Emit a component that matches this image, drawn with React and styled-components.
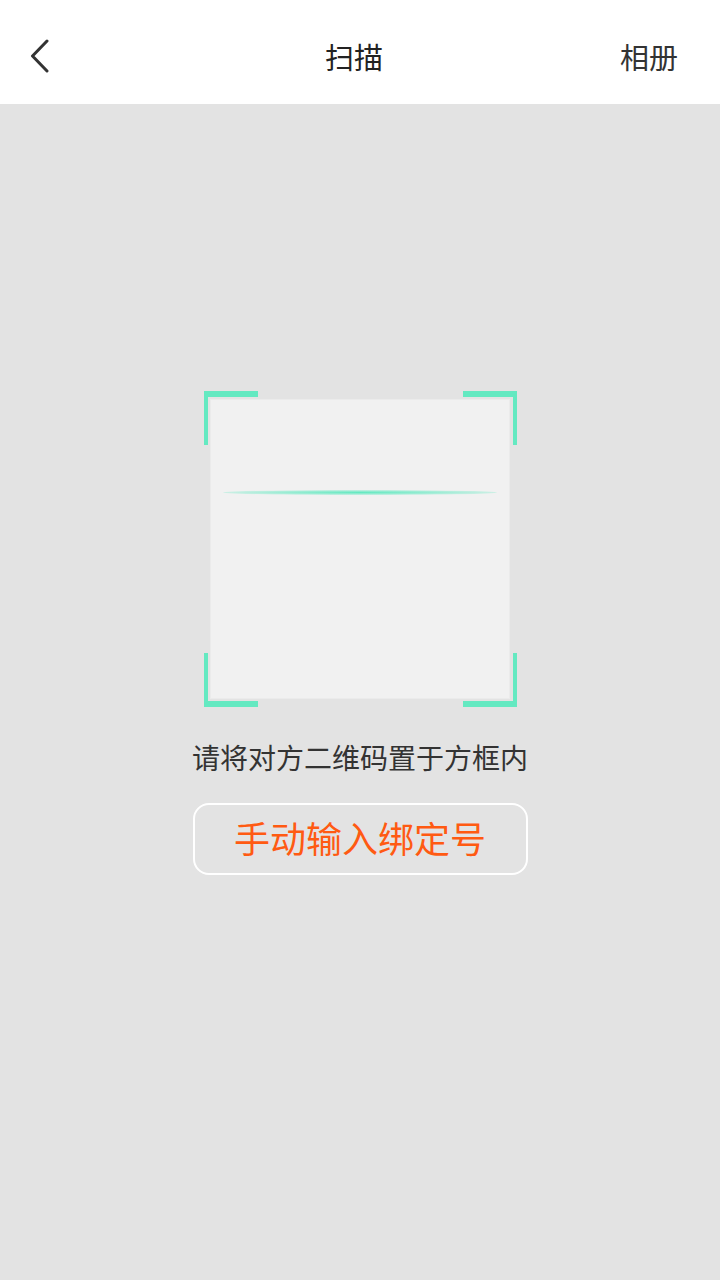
import React from 'react';
import styled, { createGlobalStyle, css } from 'styled-components';

const GlobalStyle = createGlobalStyle`
    html, body {
        margin: 0;
        padding: 0;
        background: #e3e3e3;
    }
    body {
        font-family: "Noto Sans CJK SC", "Noto Sans", sans-serif;
    }
`;

const Page = styled.div`
    min-height: 1280px;
    display: flex;
    flex-direction: column;
    background: #e3e3e3;
`;

const Header = styled.header`
    height: 104px;
    background: #fff;
    display: grid;
    grid-template-columns: 1fr auto 1fr;
    align-items: center;
    padding: 0 42px 0 30px;
    box-sizing: border-box;
`;

const BackButton = styled.button`
    border: none;
    background: none;
    padding: 0;
    width: 36px;
    height: 40px;
    display: flex;
    align-items: center;
    justify-content: flex-start;
    margin-top: 8px;
`;

const Title = styled.h1`
    margin: 0;
    text-align: center;
    font-size: 29px;
    font-weight: 400;
    color: #222;
    line-height: 1;
    margin-top: 8px;
`;

const AlbumLink = styled.span`
    justify-self: end;
    font-size: 29px;
    color: #333;
    line-height: 1;
    margin-top: 8px;
`;

const Body = styled.main`
    display: flex;
    flex-direction: column;
    align-items: center;
    padding-top: 287px;
`;

const Frame = styled.div`
    position: relative;
    width: 313px;
    height: 316px;
    box-sizing: border-box;
    padding: 8px 7px 8px 6px;
`;

const Window = styled.div`
    width: 300px;
    height: 300px;
    box-sizing: border-box;
    background: #f1f1f1;
    border: 1px solid #ebebeb;
    padding: 90px 12px 0 12px;
`;

const ScanLine = styled.div`
    height: 5px;
    border-radius: 50%;
    background: radial-gradient(ellipse at center, rgba(100, 233, 193, 1) 0%, rgba(100, 233, 193, 0.6) 40%, rgba(100, 233, 193, 0.15) 80%, rgba(100, 233, 193, 0) 100%);
`;

const Corner = styled.span`
    position: absolute;
    width: 54px;
    height: 54px;
    box-sizing: border-box;
    border: 0 solid #64e9c1;
    ${p => p.top ? css`top: 0; border-top-width: 6px;` : css`bottom: 0; border-bottom-width: 6px;`}
    ${p => p.left ? css`left: 0; border-left-width: 4px;` : css`right: 0; border-right-width: 4px;`}
`;

const Hint = styled.p`
    margin: 33px 0 0;
    font-size: 28px;
    line-height: 34px;
    color: #333;
`;

const ManualButton = styled.button`
    margin-top: 29px;
    width: 335px;
    height: 72px;
    box-sizing: border-box;
    border: 2px solid #fff;
    border-radius: 16px;
    background: transparent;
    color: #ff5a12;
    font-family: "Noto Sans CJK SC", "Noto Sans", sans-serif;
    font-size: 36px;
    line-height: 1;
    padding: 0 0 4px;
`;

const App = () => {
    return (
        <Page>
            <GlobalStyle />
            <Header>
                <BackButton aria-label="返回">
                    <svg width="22" height="34" viewBox="0 0 22 34" fill="none">
                        <path d="M17 2 L2.5 17 L17 32" stroke="#333" strokeWidth="3" strokeLinecap="round" strokeLinejoin="round" />
                    </svg>
                </BackButton>
                <Title>扫描</Title>
                <AlbumLink>相册</AlbumLink>
            </Header>
            <Body>
                <Frame>
                    <Corner top left />
                    <Corner top />
                    <Corner left />
                    <Corner />
                    <Window>
                        <ScanLine />
                    </Window>
                </Frame>
                <Hint>请将对方二维码置于方框内</Hint>
                <ManualButton>手动输入绑定号</ManualButton>
            </Body>
        </Page>
    );
};

export default App;
